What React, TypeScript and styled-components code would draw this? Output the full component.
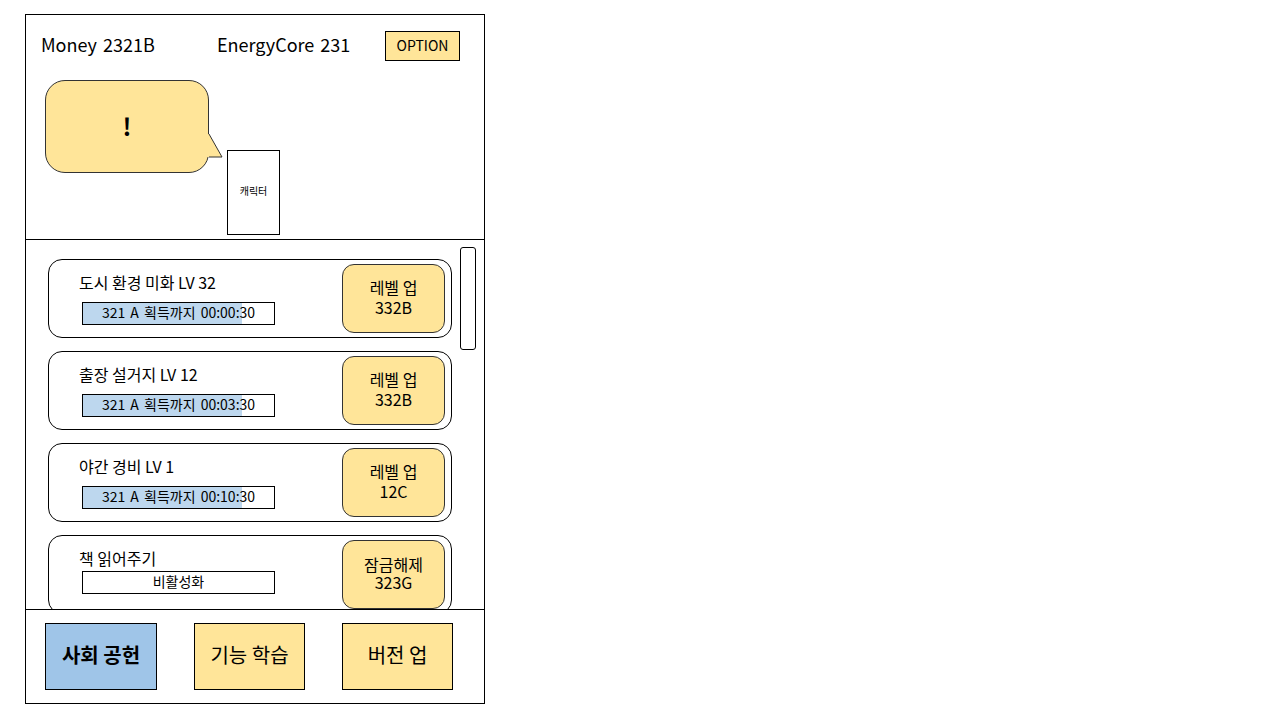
import React from "react";
import styled, { createGlobalStyle } from "styled-components";

const GlobalStyle = createGlobalStyle`
  * { box-sizing: border-box; }
  body {
    margin: 0;
    background: #ffffff;
    font-family: "Noto Sans CJK KR", "Noto Sans", sans-serif;
    color: #000;
  }
`;

const YELLOW = "#ffe599";
const BLUE = "#9fc5e8";
const BAR_BLUE = "#bdd7ee";

const Frame = styled.div`
  margin: 14px 0 0 25px;
  width: 460px;
  height: 690px;
  border: 1px solid #000;
  display: flex;
  flex-direction: column;
`;

const Header = styled.header`
  height: 225px;
  border-bottom: 1px solid #000;
  display: flex;
  flex-direction: column;
`;

const TopBar = styled.div`
  display: flex;
  align-items: center;
  padding: 16px 0 0 15px;
  height: 46px;
`;

const Stat = styled.span<{ $w: number }>`
  width: ${(p) => p.$w}px;
  font-size: 18px;
  line-height: 30px;
  word-spacing: 2px;
  margin-bottom: 4px;
`;

const OptionButton = styled.button`
  width: 75px;
  height: 30px;
  background: ${YELLOW};
  border: 1px solid #000;
  font-family: inherit;
  font-size: 14px;
  line-height: 24px;
  padding: 0 0 3px;
  color: #000;
`;

const Scene = styled.div`
  display: flex;
  align-items: flex-start;
  padding-left: 19px;
  margin-top: 19px;
`;

const Bubble = styled.div`
  position: relative;
  width: 164px;
  height: 93px;
  background: ${YELLOW};
  border: 1px solid #333;
  border-radius: 20px;
  display: flex;
  align-items: center;
  justify-content: center;
  padding-bottom: 2px;
  font-size: 24px;
  font-weight: 700;
`;

const Tail = styled.svg`
  position: absolute;
  left: 161px;
  top: 53px;
  width: 16px;
  height: 25px;
  overflow: visible;
`;

const Character = styled.div`
  margin: 70px 0 0 18px;
  width: 53px;
  height: 85px;
  border: 1px solid #000;
  display: flex;
  align-items: center;
  justify-content: center;
  padding-bottom: 4px;
  font-size: 10px;
`;

const ListArea = styled.section`
  height: 369px;
  overflow: hidden;
  display: flex;
  align-items: flex-start;
`;

const CardColumn = styled.div`
  display: flex;
  flex-direction: column;
  gap: 13px;
  padding: 19px 0 0 22px;
`;

const Card = styled.div`
  width: 404px;
  height: 79px;
  flex-shrink: 0;
  border: 1px solid #000;
  border-radius: 14px;
  display: flex;
  align-items: flex-start;
  padding: 4px 6px 0 30px;
`;

const Info = styled.div`
  flex: 1;
  display: flex;
  flex-direction: column;
`;

const Title = styled.div`
  font-size: 16px;
  line-height: 20px;
  margin-top: 8px;
`;

const Bar = styled.div<{ $tight?: boolean }>`
  position: relative;
  margin: ${(p) => (p.$tight ? "3px" : "10px")} 0 0 3px;
  width: 193px;
  height: 23px;
  border: 1px solid #000;
  background: #fff;
  display: flex;
  align-items: center;
  justify-content: center;
  padding-bottom: 3px;
`;

const BarFill = styled.div`
  position: absolute;
  left: 0;
  top: 0;
  bottom: 0;
  background: ${BAR_BLUE};
`;

const BarText = styled.span`
  position: relative;
  font-size: 14px;
  line-height: 18px;
  word-spacing: 2px;
`;

const ActionButton = styled.button<{ $tight?: boolean }>`
  width: 103px;
  height: 69px;
  flex-shrink: 0;
  background: ${YELLOW};
  border: 1px solid #333;
  border-radius: 12px;
  font-family: inherit;
  font-size: 16px;
  line-height: ${(p) => (p.$tight ? "18px" : "20px")};
  color: #000;
  padding: 0 0 3px;
  display: flex;
  flex-direction: column;
  align-items: center;
  justify-content: center;
`;

const ScrollTrack = styled.div`
  margin: 7px 0 0 8px;
  width: 16px;
  height: 103px;
  border: 1px solid #000;
  border-radius: 3px;
  background: #fff;
`;

const Footer = styled.footer`
  height: 94px;
  border-top: 1px solid #000;
  display: flex;
  gap: 37px;
  padding: 13px 0 0 19px;
`;

const TabButton = styled.button<{ $active?: boolean; $w: number }>`
  width: ${(p) => p.$w}px;
  height: 67px;
  background: ${(p) => (p.$active ? BLUE : YELLOW)};
  border: 1px solid #000;
  font-family: inherit;
  font-size: 20px;
  line-height: 26px;
  font-weight: ${(p) => (p.$active ? 700 : 400)};
  color: #000;
  padding: 0 0 4px;
`;

type Job = {
  title: string;
  bar: string;
  fill?: number;
  action: string;
  cost: string;
  locked?: boolean;
};

const jobs: Job[] = [
  { title: "도시 환경 미화 LV 32", bar: "321 A 획득까지 00:00:30", fill: 159, action: "레벨 업", cost: "332B" },
  { title: "출장 설거지 LV 12", bar: "321 A 획득까지 00:03:30", fill: 159, action: "레벨 업", cost: "332B" },
  { title: "야간 경비 LV 1", bar: "321 A 획득까지 00:10:30", fill: 159, action: "레벨 업", cost: "12C" },
  { title: "책 읽어주기", bar: "비활성화", action: "잠금해제", cost: "323G", locked: true },
];

export default function App() {
  return (
    <>
      <GlobalStyle />
      <Frame>
        <Header>
          <TopBar>
            <Stat $w={176}>Money 2321B</Stat>
            <Stat $w={168}>EnergyCore 231</Stat>
            <OptionButton>OPTION</OptionButton>
          </TopBar>
          <Scene>
            <Bubble>
              !
              <Tail viewBox="0 0 16 25">
                <polygon points="0,0 2,0 15,23 0,23" fill={YELLOW} />
                <polyline points="2,0 15,23 2,23" fill="none" stroke="#333" strokeWidth="1" />
              </Tail>
            </Bubble>
            <Character>캐릭터</Character>
          </Scene>
        </Header>
        <ListArea>
          <CardColumn>
            {jobs.map((j) => (
              <Card key={j.title}>
                <Info>
                  <Title>{j.title}</Title>
                  <Bar $tight={j.locked}>
                    {j.fill ? <BarFill style={{ width: j.fill }} /> : null}
                    <BarText>{j.bar}</BarText>
                  </Bar>
                </Info>
                <ActionButton $tight={j.locked}>
                  <span>{j.action}</span>
                  <span>{j.cost}</span>
                </ActionButton>
              </Card>
            ))}
          </CardColumn>
          <ScrollTrack />
        </ListArea>
        <Footer>
          <TabButton $active $w={112}>사회 공헌</TabButton>
          <TabButton $w={111}>기능 학습</TabButton>
          <TabButton $w={111}>버전 업</TabButton>
        </Footer>
      </Frame>
    </>
  );
}
